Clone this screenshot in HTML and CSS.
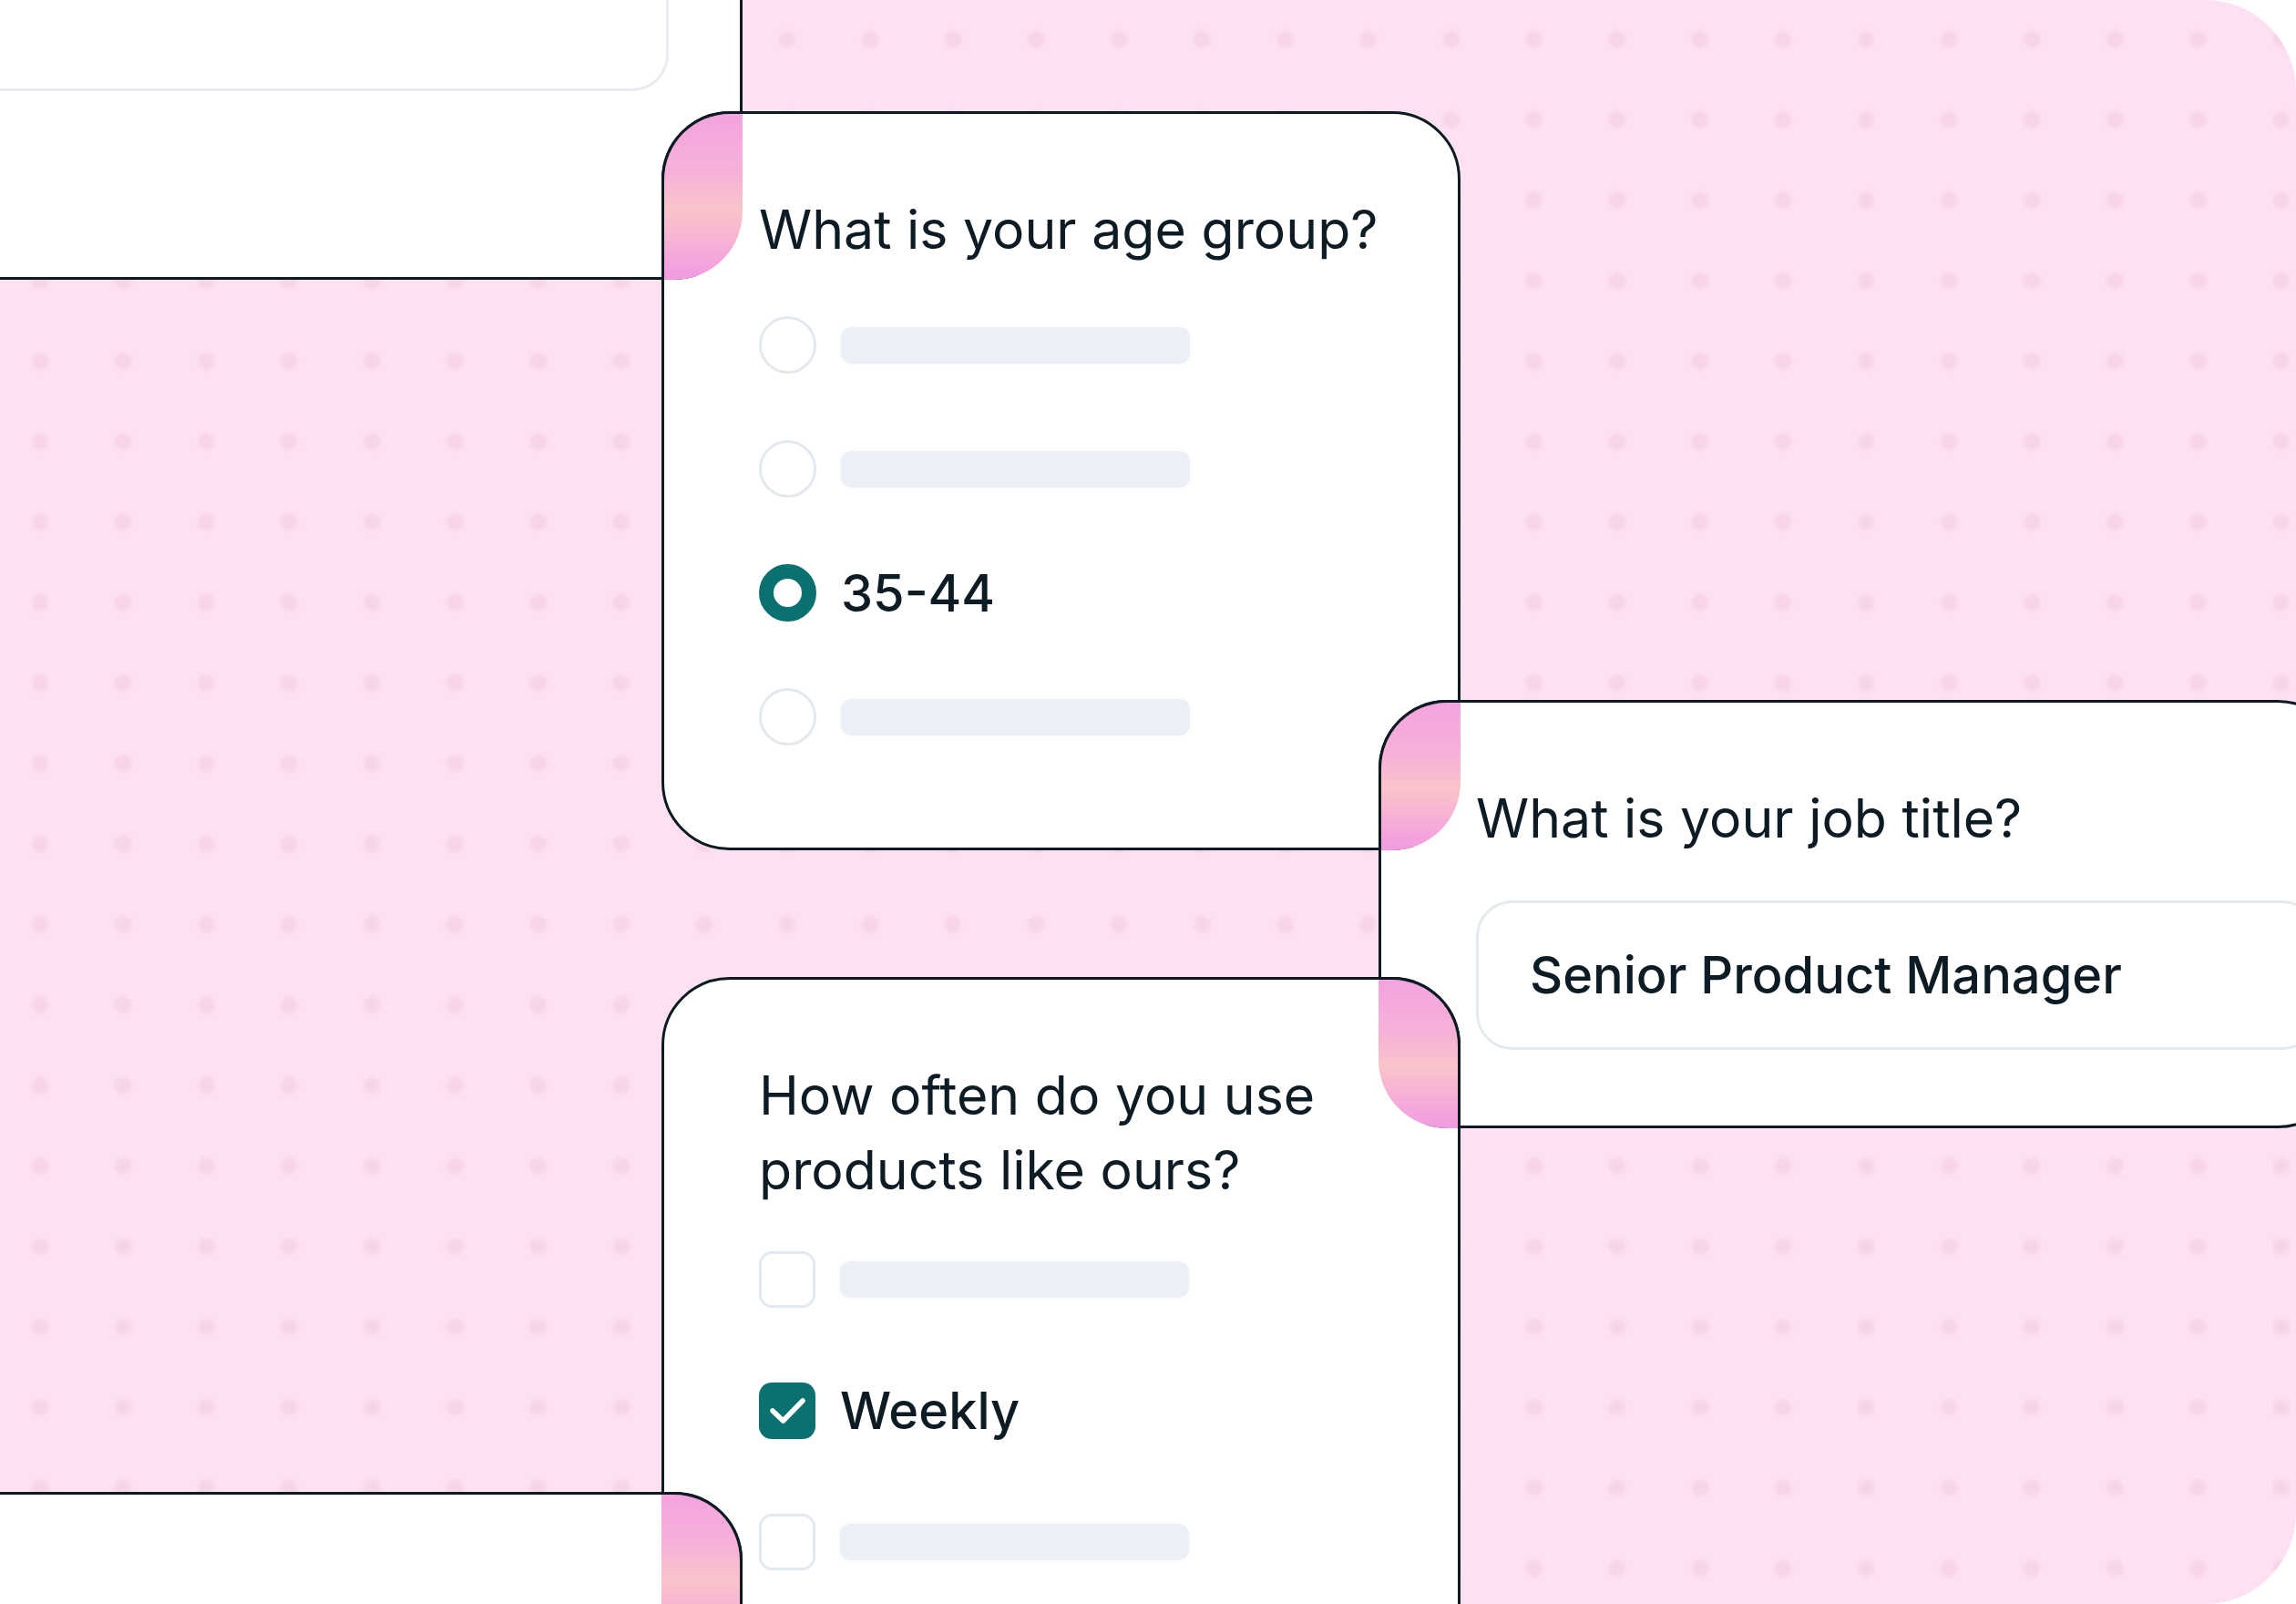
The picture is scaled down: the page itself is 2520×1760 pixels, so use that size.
FILE: index.html
```html
<!DOCTYPE html>
<html>
	<head>
		<meta charset="utf-8" />
		<title>Survey questions</title>
		<link rel="stylesheet" href="styles.css">
	</head>
	<body>
		<div class="board">
			<!-- previous question, only its answer field peeks in -->
			<div class="card card-intro">
				<div class="field field-ghost"></div>
			</div>

			<div class="card card-age">
				<h2 class="question">What is your age group?</h2>
				<ul class="options options-radio">
					<li class="option"><span class="radio"></span><span class="bar"></span></li>
					<li class="option"><span class="radio"></span><span class="bar"></span></li>
					<li class="option"><span class="radio radio-on"></span><span class="label">35-44</span></li>
					<li class="option"><span class="radio"></span><span class="bar"></span></li>
				</ul>
			</div>

			<div class="card card-job">
				<h2 class="question">What is your job title?</h2>
				<div class="field"><span class="label">Senior Product Manager</span></div>
			</div>

			<div class="card card-freq">
				<h2 class="question">How often do you use products like ours?</h2>
				<ul class="options options-check">
					<li class="option"><span class="check"></span><span class="bar"></span></li>
					<li class="option">
						<span class="check check-on">
							<svg viewBox="0 0 62 62" width="62" height="62"><polyline points="15,31 26.5,42 48,20" /></svg>
						</span>
						<span class="label">Weekly</span>
					</li>
					<li class="option"><span class="check"></span><span class="bar"></span></li>
				</ul>
			</div>

			<!-- next question, just its top edge -->
			<div class="card card-outro"></div>

			<!-- gradient joints where two cards overlap -->
			<span class="joint joint-a"></span>
			<span class="joint joint-b"></span>
			<span class="joint joint-c"></span>
			<span class="joint joint-d"></span>
		</div>
	</body>
</html>
```
FILE: styles.css
```css
body{
	margin: 0;
	background: #fff;
}
.board{
	position: relative;
	width: 2520px;
	height: 1760px;
	overflow: hidden;
	border-radius: 0 100px 100px 0;
	background-color: #fde0f1;
	background-image: radial-gradient(circle, #f8d4e8 0, #f8d4e8 6px, rgba(248,212,232,0) 12px);
	background-size: 91.1px 88.3px;
	background-position: -1.5px -1px;
	font-family: Inter, "Liberation Sans", sans-serif;
	color: #0c1b24;
}

/* cards */
.card{
	position: absolute;
	box-sizing: border-box;
	background: #fff;
	border: 3px solid #0c1a22;
	border-radius: 75px;
}
.card-intro{
	left: -200px;
	top: -100px;
	width: 1015px;
	height: 407px;
	padding: 0 78px 0 0;
}
.card-age{
	left: 726px;
	top: 122px;
	width: 877px;
	height: 811px;
	padding: 86px 40px 0 104px;
}
.card-job{
	left: 1513px;
	top: 768px;
	width: 1062px;
	height: 470px;
	padding: 86px 0 0 104px;
}
.card-freq{
	left: 726px;
	top: 1072px;
	width: 877px;
	height: 1000px;
	padding: 86px 40px 0 104px;
}
.card-outro{
	left: -200px;
	top: 1637px;
	width: 1015px;
	height: 400px;
}

.question{
	margin: 0;
	font-size: 59px;
	line-height: 82px;
	font-weight: 400;
}

/* answers */
.options{
	list-style: none;
	margin: 0;
	padding: 0;
	display: flex;
	flex-direction: column;
}
.options-radio{
	margin-top: 54px;
	gap: 73px;
}
.options-check{
	margin-top: 48px;
	gap: 82px;
}
.option{
	display: flex;
	align-items: center;
	gap: 27px;
}
.bar{
	width: 383px;
	height: 40px;
	border-radius: 12px;
	background: #eaf0f5;
	box-shadow: 0 0 4px #f1f5f8;
}
.label{
	font-size: 56px;
	font-weight: 500;
	line-height: 1;
}
.radio{
	box-sizing: border-box;
	width: 63px;
	height: 63px;
	border-radius: 50%;
	border: 3px solid #e3e9ee;
	background: #fff;
}
.radio-on{
	border: 16px solid #0b7170;
}
.check{
	box-sizing: border-box;
	width: 62px;
	height: 62px;
	border-radius: 14px;
	border: 3px solid #e3e9ee;
	background: #fff;
}
.check-on{
	border: 0;
	background: #0b7170;
}
.check svg{
	display: block;
}
.check polyline{
	fill: none;
	stroke: #fff;
	stroke-width: 5.5;
	stroke-linecap: round;
	stroke-linejoin: round;
}

/* text field */
.field{
	box-sizing: border-box;
	width: 925px;
	height: 164px;
	margin-top: 49px;
	padding-left: 56px;
	display: flex;
	align-items: center;
	border: 3px solid #e5eaef;
	border-radius: 40px;
	background: #fff;
}
.field-ghost{
	width: auto;
	height: 197px;
	margin-top: 0;
	border-color: #e8ecf1;
}

/* overlap joints */
.joint{
	position: absolute;
	box-sizing: border-box;
	border: 0 solid #0c1a22;
	background: linear-gradient(180deg, #f4a3de 0%, #f6b2d8 36%, #f9c4ca 58%, #f7b2d5 76%, #f29ae2 100%);
}
.joint-a{
	left: 726px;
	top: 122px;
	width: 89px;
	height: 185px;
	border-top-width: 3px;
	border-left-width: 3px;
	border-radius: 75px 0 75px 0;
}
.joint-b{
	left: 1513px;
	top: 768px;
	width: 90px;
	height: 165px;
	border-top-width: 3px;
	border-left-width: 3px;
	border-radius: 75px 0 75px 0;
}
.joint-c{
	left: 1513px;
	top: 1072px;
	width: 90px;
	height: 166px;
	border-top-width: 3px;
	border-right-width: 3px;
	border-radius: 0 75px 0 75px;
}
.joint-d{
	left: 726px;
	top: 1637px;
	width: 89px;
	height: 165px;
	border-top-width: 3px;
	border-right-width: 3px;
	border-radius: 0 75px 0 0;
}
```
